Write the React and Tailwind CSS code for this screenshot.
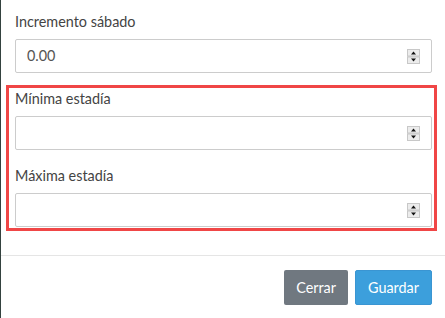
import React from 'react'

const Spinner = () => (
  <svg width="13" height="15" viewBox="0 0 13 15" className="block">
    <rect x="0" y="0" width="13" height="15" fill="#e3e3e3" />
    <rect x="0.5" y="0.5" width="12" height="6.5" fill="#ececec" stroke="#c8c8c8" />
    <rect x="0.5" y="8" width="12" height="6.5" fill="#ececec" stroke="#c8c8c8" />
    <path d="M4 5.5 L6.5 2.5 L9 5.5 Z" fill="#111" />
    <path d="M4 9.5 L6.5 12.5 L9 9.5 Z" fill="#111" />
  </svg>
)

const NumberField = ({ label, value }) => (
  <div>
    <label className="block text-[14.4px] leading-[20px] text-[#444] mb-[7px]">{label}</label>
    <div className="flex items-center h-[34px] border border-[#ccc] rounded-[2px] bg-white pl-[11px] pr-[11px]">
      <span className="flex-1 text-[14.4px] text-[#555]">{value}</span>
      <Spinner />
    </div>
  </div>
)

export default function App() {
  return (
    <div className="flex w-[445px] h-[318px] overflow-hidden bg-white" style={{ fontFamily: 'Lato, "Open Sans", sans-serif' }}>
      <div className="w-[1px] shrink-0 bg-[#34423f]" />
      <div className="flex-1 flex flex-col">
        {/* Cuerpo */}
        <div className="pl-[14px] pr-[13px] pt-[12px] pb-[24px] border-b border-[#e5e5e5]">
          <NumberField label="Incremento sábado" value="0.00" />
          <div className="mt-[12px] -ml-[9px] -mr-[5px] border-[3px] border-[#f04646] pl-[6px] pr-[2px] pt-[1px] pb-[1px]">
            <NumberField label="Mínima estadía" value="" />
            <div className="mt-[16px]">
              <NumberField label="Máxima estadía" value="" />
            </div>
          </div>
        </div>

        {/* Pie */}
        <div className="flex justify-end gap-[7px] pt-[14px] pr-[13px]">
          <button className="h-[35px] px-[12px] rounded-[2px] bg-[#707880] text-white text-[14.4px]">Cerrar</button>
          <button className="h-[35px] px-[12px] rounded-[2px] bg-[#3c9fdc] border border-[#3a95d2] text-white text-[14.4px]">Guardar</button>
        </div>
      </div>
    </div>
  )
}
